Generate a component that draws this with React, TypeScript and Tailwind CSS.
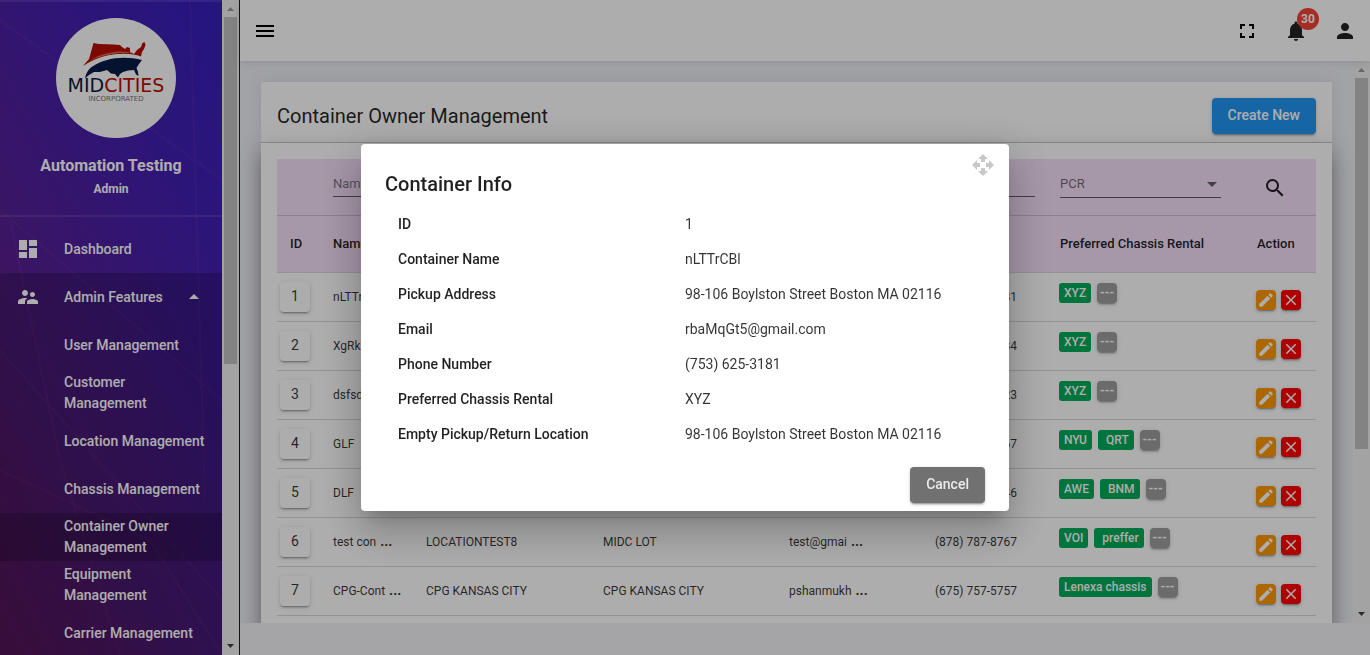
import React, { useState } from "react";
import {
  MdArrowDropDown,
  MdArrowDropUp,
  MdClose,
  MdDashboard,
  MdEdit,
  MdFullscreen,
  MdMenu,
  MdNotifications,
  MdOpenWith,
  MdPerson,
  MdSearch,
  MdSupervisorAccount,
} from "react-icons/md";

type Row = {
  name: string;
  cutName?: boolean;
  pickup?: string;
  returns?: string;
  email?: string;
  phone: string;
  tags: string[];
};

const rows: Row[] = [
  { name: "nLTTrCBl", phone: "(753) 625-3181", tags: ["XYZ"] },
  { name: "XgRkL", phone: "(753) 625-3184", tags: ["XYZ"] },
  { name: "dsfsdf", phone: "(753) 625-3123", tags: ["XYZ"] },
  { name: "GLF", phone: "(878) 787-8767", tags: ["NYU", "QRT"] },
  { name: "DLF", phone: "(878) 787-8746", tags: ["AWE", "BNM"] },
  { name: "test con", cutName: true, pickup: "LOCATIONTEST8", returns: "MIDC LOT", email: "test@gmai", phone: "(878) 787-8767", tags: ["VOI", "preffer"] },
  { name: "CPG-Cont", cutName: true, pickup: "CPG KANSAS CITY", returns: "CPG KANSAS CITY", email: "pshanmukh", phone: "(675) 757-5757", tags: ["Lenexa chassis"] },
];

const subItems = [
  "User Management",
  "Customer Management",
  "Location Management",
  "Chassis Management",
  "Container Owner Management",
  "Equipment Management",
  "Carrier Management",
];

const details: [string, string][] = [
  ["ID", "1"],
  ["Container Name", "nLTTrCBl"],
  ["Pickup Address", "98-106 Boylston Street Boston MA 02116"],
  ["Email", "rbaMqGt5@gmail.com"],
  ["Phone Number", "(753) 625-3181"],
  ["Preferred Chassis Rental", "XYZ"],
  ["Empty Pickup/Return Location", "98-106 Boylston Street Boston MA 02116"],
];

const raised =
  "shadow-[0_3px_1px_-2px_rgba(0,0,0,0.2),0_2px_2px_0_rgba(0,0,0,0.14),0_1px_5px_0_rgba(0,0,0,0.12)]";

function Logo() {
  return (
    <svg viewBox="0 0 120 120" className="h-[120px] w-[120px] shrink-0" role="img" aria-label="Midcities Incorporated">
      <circle cx="60" cy="60" r="60" fill="#ffffff" />
      <path
        d="M37.5 25 L43 26 L58 26.5 L64 27 L66 29 L69 31 L71 29 L74 30 L74 34 L78 36 L81 32 L85 29 L86.5 25 L88.5 24 L89.5 27 L88 31 L86 34 L85 38.5 C72 34 50 34 27 48 L33 41 L35 34 Z"
        fill="#b80c03"
      />
      <path d="M33 43 C50 32 68 32 78 35.5 C64 34 50 36 33 43 Z" fill="#c9694a" />
      <path d="M30 46.5 C50 33.5 76 33 92 42.5 C74 36 50 37 30 46.5 Z" fill="#ffffff" />
      <path
        d="M29 60.5 C30 55 32 52 35 49.5 C48 40 68 37.5 86 42 L83 46 L80.5 50 L82 54 L82.5 58 L80 56.5 L78 52 L72 52.5 L67 54 L64 56 L62 59.5 L59 56 L55 55.500 L51 52 L44 54 L38 54 L33 57 Z"
        fill="#081b47"
      />
      <text x="60" y="74" textAnchor="middle" fontFamily="DejaVu Sans, sans-serif" fontSize="19" fill="#081b47">
        MID<tspan fill="#b80c03">CITIES</tspan>
      </text>
      <text x="60" y="83" textAnchor="middle" fontFamily="DejaVu Sans, sans-serif" fontSize="7" fill="#777777">
        INCORPORATED
      </text>
    </svg>
  );
}

function ScrollTrack({ thumb }: { thumb: string }) {
  return (
    <div className="flex w-[17px] shrink-0 flex-col items-center bg-[#f1f1f1]" aria-hidden="true">
      <svg viewBox="0 0 17 17" className="h-[17px] w-[17px] shrink-0">
        <path d="M5 11 L8.5 7 L12 11 Z" fill="#9a9a9a" />
      </svg>
      <div className={`w-[13px] bg-[#c1c1c1] ${thumb}`} />
      <svg viewBox="0 0 17 17" className="mt-auto h-[17px] w-[17px] shrink-0">
        <path d="M5 6 L8.5 10 L12 6 Z" fill="#404040" />
      </svg>
    </div>
  );
}

function Sidebar() {
  return (
    <aside className="flex w-60 shrink-0 border-r border-[#1c1c1c]">
      <div className="relative min-w-0 flex-1 overflow-hidden bg-[linear-gradient(242deg,#361fbe_0%,#4420b0_28%,#581f92_62%,#681a6c_100%)] text-white">
        <svg
          viewBox="0 0 222 655"
          preserveAspectRatio="none"
          className="absolute inset-0 h-full w-full"
          fill="none"
          stroke="#ff6fb0"
          strokeOpacity="0.06"
          strokeWidth="2"
          aria-hidden="true"
        >
          <path d="M0 20 L222 180 M0 210 L222 400 M190 0 L205 500 M10 220 L60 460 L120 655 M0 350 L222 600" />
          <path d="M0 470 L150 540 L222 655" />
        </svg>
        <div className="relative flex h-full flex-col">
          <div className="flex flex-col items-center border-y-2 border-white/10 pt-4 pb-[18px]">
            <div className="pl-2.5">
              <Logo />
            </div>
            <p className="mt-4 text-base leading-6 font-bold">Automation Testing</p>
            <p className="mt-[3px] text-xs leading-4 font-bold">Admin</p>
          </div>
          <nav className="mt-2 flex-1 text-sm leading-[21px] font-medium">
            <a href="#dashboard" className="flex h-12 items-center gap-6 pl-4">
              <MdDashboard size={24} />
              Dashboard
            </a>
            <div className="bg-black/20">
              <button type="button" className="flex h-12 w-full items-center pr-4 pl-4 text-left">
                <MdSupervisorAccount size={24} className="mr-6 shrink-0" />
                <span className="flex-1 whitespace-nowrap">Admin Features</span>
                <MdArrowDropUp size={24} className="shrink-0" />
              </button>
              <ul>
                {subItems.map((item) => (
                  <li key={item}>
                    <a
                      href="#list"
                      className={`flex h-12 items-center pr-4 pl-16 ${
                        item.startsWith("Container") ? "bg-black/20" : ""
                      }`}
                    >
                      {item}
                    </a>
                  </li>
                ))}
              </ul>
            </div>
          </nav>
        </div>
      </div>
      <ScrollTrack thumb="h-[53%]" />
    </aside>
  );
}

function TopBar() {
  return (
    <header className="z-10 flex h-[61px] shrink-0 items-center bg-white px-[13px] text-black shadow-[0_2px_8px_rgba(60,60,90,0.15)]">
      <button type="button" aria-label="Toggle menu" className="mr-auto">
        <MdMenu size={24} />
      </button>
      <div className="flex items-center gap-[25px]">
        <button type="button" aria-label="Full screen">
          <MdFullscreen size={24} />
        </button>
        <button type="button" aria-label="Notifications" className="relative">
          <MdNotifications size={24} className="text-[#222]" />
          <span className="absolute -top-[11px] left-[13px] flex h-[22px] w-[22px] items-center justify-center rounded-full bg-[#f44336] text-xs font-bold text-white">
            30
          </span>
        </button>
        <button type="button" aria-label="Account">
          <MdPerson size={24} className="text-[#222]" />
        </button>
      </div>
    </header>
  );
}

function FilterInput({ label }: { label: string }) {
  return (
    <input
      type="text"
      aria-label={label}
      placeholder={label}
      className="block h-[26px] w-4/5 border-b border-black/60 bg-transparent text-[13px] outline-none placeholder:text-black/50"
    />
  );
}

function OwnerTable() {
  return (
    <table className="w-full table-fixed border-collapse text-left">
      <colgroup>
        <col className="w-[56px]" />
        <col className="w-[93px]" />
        <col className="w-[177px]" />
        <col className="w-[186px]" />
        <col className="w-[146px]" />
        <col className="w-[125px]" />
        <col className="w-[197px]" />
        <col className="w-[59px]" />
      </colgroup>
      <thead className="bg-[#f5dff9] text-[13px] text-black/87">
        <tr className="h-14 border-b border-black/15">
          <td />
          <td className="pb-1.5"><FilterInput label="Name" /></td>
          <td className="pb-1.5"><FilterInput label="Pickup Address" /></td>
          <td className="pb-1.5"><FilterInput label="Return Location" /></td>
          <td className="pb-1.5"><FilterInput label="Email" /></td>
          <td className="pb-1.5"><FilterInput label="Phone" /></td>
          <td className="pb-1.5">
            <div className="relative w-[161px]">
              <select
                aria-label="PCR"
                defaultValue=""
                className="block h-7 w-full appearance-none border-b border-black/60 bg-transparent text-[13px] text-black/55 outline-none"
              >
                <option value="">PCR</option>
                <option>XYZ</option>
              </select>
              <MdArrowDropDown size={24} className="pointer-events-none absolute top-0.5 -right-[3px] text-black/60" />
            </div>
          </td>
          <td>
            <button type="button" aria-label="Search" className="ml-1.5 block pt-0.5">
              <MdSearch size={24} />
            </button>
          </td>
        </tr>
        <tr className="h-[57px] border-b border-black/15">
          <th className="pl-[13px] font-medium">ID</th>
          <th className="font-medium">Name</th>
          <th className="font-medium">Pickup Address</th>
          <th className="font-medium">Return Location</th>
          <th className="font-medium">Email</th>
          <th className="font-medium">Phone</th>
          <th className="font-medium">Preferred Chassis Rental</th>
          <th className="font-medium">Action</th>
        </tr>
      </thead>
      <tbody className="text-xs text-black/80">
        {rows.map((row, i) => (
          <tr key={i} className="h-[49px] border-b border-black/15">
            <td className="pl-[3px]">
              <button
                type="button"
                className={`flex h-[30px] w-[30px] items-center justify-center rounded-[4px] bg-white pb-px text-sm ${raised}`}
              >
                {i + 1}
              </button>
            </td>
            <td>
              {row.name}
              {row.cutName && <b className="ml-1 text-sm leading-4">...</b>}
            </td>
            <td>{row.pickup}</td>
            <td>{row.returns}</td>
            <td>
              {row.email}
              {row.email && <b className="ml-1 text-sm leading-4">...</b>}
            </td>
            <td>{row.phone}</td>
            <td className="align-top">
              <div className="-ml-px flex gap-1.5 pt-2.5 leading-5 font-medium text-white">
                {row.tags.map((tag, t) => (
                  <span key={tag} className={`h-5 rounded-[3px] bg-[#00ab5a] pr-[5px] ${t > 0 ? "pl-2" : "pl-[5px]"}`}>
                    {tag}
                  </span>
                ))}
                <button
                  type="button"
                  aria-label="More"
                  className={`h-5 w-5 rounded-[4px] bg-[#9e9e9e] font-bold ${raised}`}
                >
                  ---
                </button>
              </div>
            </td>
            <td className="align-top">
              <div className="-ml-px flex gap-[5px] pt-[17px] text-white">
                <button
                  type="button"
                  aria-label="Edit"
                  className={`flex h-5 w-5 items-center justify-center rounded-[4px] bg-[#ff9900] ${raised}`}
                >
                  <MdEdit size={18} />
                </button>
                <button
                  type="button"
                  aria-label="Delete"
                  className={`flex h-5 w-5 items-center justify-center rounded-[4px] bg-[#ff0000] ${raised}`}
                >
                  <MdClose size={18} />
                </button>
              </div>
            </td>
          </tr>
        ))}
      </tbody>
    </table>
  );
}

function InfoDialog({ onClose }: { onClose: () => void }) {
  return (
    <div className="fixed inset-0 z-20 flex items-center justify-center bg-black/32">
      <div
        role="dialog"
        aria-modal="true"
        aria-labelledby="info-title"
        className="relative w-[648px] max-w-[80vw] rounded-[4px] bg-white px-6 pt-6 pb-2 text-sm text-black/87 shadow-[0_11px_15px_-7px_rgba(0,0,0,0.2),0_24px_38px_3px_rgba(0,0,0,0.14),0_9px_46px_8px_rgba(0,0,0,0.12)]"
      >
        <MdOpenWith size={24} className="absolute top-[9px] right-3.5 cursor-move text-[#c8c8c8]" />
        <h2 id="info-title" className="text-xl leading-8 font-medium">
          Container Info
        </h2>
        <dl className="mt-[7px] pl-[13px]">
          {details.map(([label, value]) => (
            <div key={label} className="grid grid-cols-[287px_1fr] leading-[35px]">
              <dt className="font-medium">{label}</dt>
              <dd className="text-black/80">{value}</dd>
            </div>
          ))}
        </dl>
        <div className="mt-[15px] flex justify-end">
          <button
            type="button"
            onClick={onClose}
            className={`h-9 rounded-[4px] bg-[#717171] px-4 pb-0.5 font-medium text-white/85 ${raised}`}
          >
            Cancel
          </button>
        </div>
      </div>
    </div>
  );
}

export default function App() {
  const [open, setOpen] = useState(true);
  return (
    <div className="flex h-screen overflow-hidden bg-[#f3f4f6] font-[Roboto,sans-serif]">
      <Sidebar />
      <div className="flex min-w-0 flex-1 flex-col">
        <TopBar />
        <div className="mb-8 flex min-h-0 flex-1">
          <main className="min-w-0 flex-1 overflow-hidden bg-[#eff0f6] px-[21px] pt-[21px]">
            <section className="rounded-[2px] shadow-[0_0_16px_rgba(80,80,110,0.14)]">
              <div className="flex h-[61px] items-center justify-between rounded-t-[2px] border-b border-black/20 bg-white px-4 pt-2">
                <h1 className="text-xl leading-7 text-black/87">Container Owner Management</h1>
                <button
                  type="button"
                  onClick={() => setOpen(true)}
                  className={`h-9 rounded-[4px] bg-[#2196f3] px-4 pb-0.5 text-sm font-medium text-white ${raised}`}
                >
                  Create New
                </button>
              </div>
              <div className="bg-white p-4 shadow-[0_10px_20px_rgba(60,60,60,0.5)]">
                <OwnerTable />
              </div>
            </section>
          </main>
          <ScrollTrack thumb="h-[66%]" />
        </div>
      </div>
      {open && <InfoDialog onClose={() => setOpen(false)} />}
    </div>
  );
}
